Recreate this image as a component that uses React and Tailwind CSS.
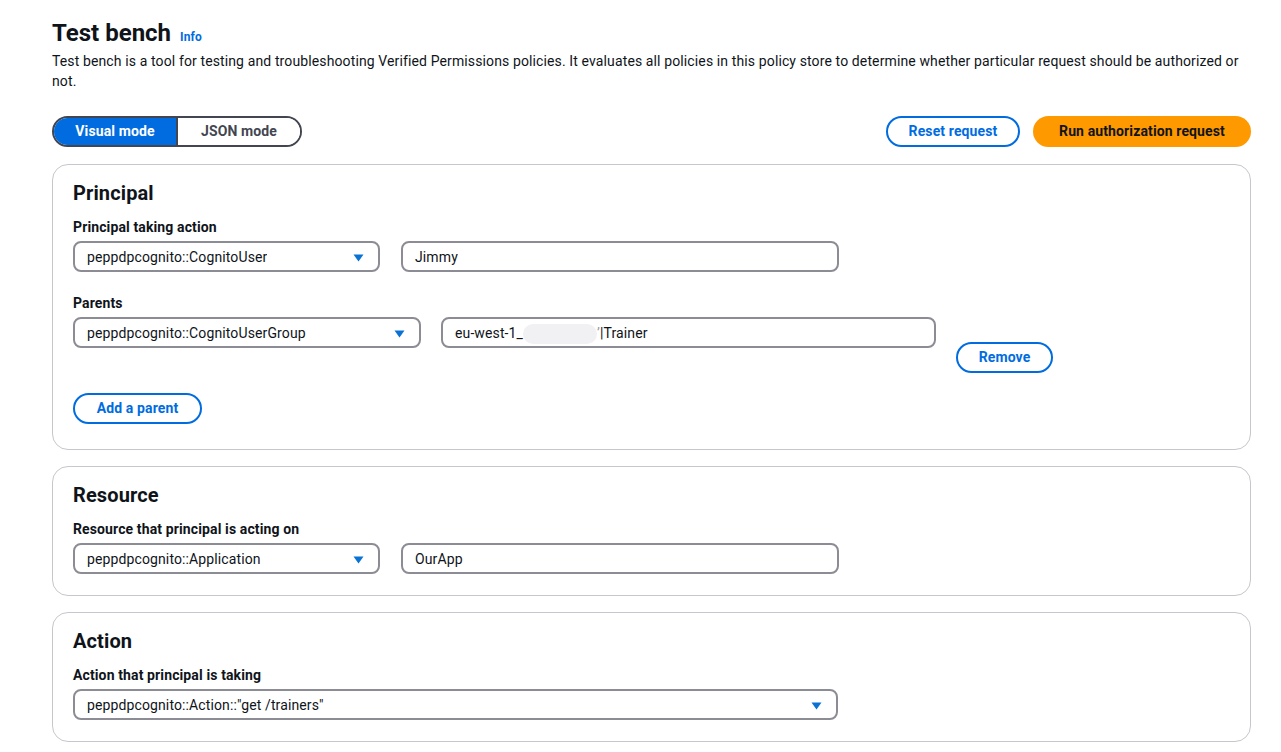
import React from "react";

const font = { fontFamily: 'Roboto, "Open Sans", sans-serif' };

function Caret() {
  return (
    <svg width="11" height="8" viewBox="0 0 11 8" className="shrink-0">
      <polygon points="0.5,0.5 10.5,0.5 5.5,7.5" fill="#0972d3" />
    </svg>
  );
}

function Select({ value, className }) {
  return (
    <div
      className={
        "h-[31px] border-2 border-[#8c8c94] rounded-[8px] flex items-center justify-between pl-[12px] pr-[14px] pt-[2px] text-[14px] text-[#0f141a] bg-white " +
        className
      }
    >
      <span className="truncate">{value}</span>
      <Caret />
    </div>
  );
}

function Input({ children, className }) {
  return (
    <div
      className={
        "h-[31px] border-2 border-[#8c8c94] rounded-[8px] flex items-center pl-[12px] pr-[12px] pt-[2px] text-[14px] text-[#0f141a] bg-white " +
        className
      }
    >
      {children}
    </div>
  );
}

function Label({ children }) {
  return <div className="text-[14px] leading-[20px] font-bold text-[#0f141a]">{children}</div>;
}

function Heading({ children }) {
  return <h2 className="text-[20px] leading-[24px] font-bold text-[#0f141a]">{children}</h2>;
}

function OutlineButton({ children, className }) {
  return (
    <button
      className={
        "h-[31px] border-2 border-[#006ce0] rounded-full text-[14px] font-bold text-[#006ce0] bg-white flex items-center justify-center " +
        className
      }
    >
      {children}
    </button>
  );
}

export default function App() {
  return (
    <div className="bg-white min-h-[752px] pl-[52px] pr-[30px] pt-[18px] text-[#0f141a] tracking-[0.12px]" style={font}>
      <div className="flex items-baseline gap-[9px]">
        <h1 className="text-[24px] leading-[30px] font-bold tracking-normal">Test bench</h1>
        <span className="text-[12px] font-bold text-[#006ce0]">Info</span>
      </div>
      <p className="mt-[3px] text-[14px] leading-[20px]">
        Test bench is a tool for testing and troubleshooting Verified Permissions policies. It evaluates all policies in
        this policy store to determine whether particular request should be authorized or not.
      </p>

      <div className="mt-[25px] flex items-center justify-between">
        <div className="flex h-[31px] border-2 border-[#424650] rounded-full overflow-hidden">
          <div className="w-[124px] bg-[#006ce0] text-white text-[14px] font-bold flex items-center justify-center border-r-2 border-[#424650]">
            Visual mode
          </div>
          <div className="w-[122px] bg-white text-[#424650] text-[14px] font-bold flex items-center justify-center">
            JSON mode
          </div>
        </div>
        <div className="flex items-center gap-[13px]">
          <OutlineButton className="w-[134px]">Reset request</OutlineButton>
          <button className="h-[31px] w-[218px] rounded-full bg-[#ff9900] text-[14px] font-bold text-[#0f141a]">
            Run authorization request
          </button>
        </div>
      </div>

      <div className="mt-[17px] flex flex-col gap-[16px]">
        <section className="border border-[#c6c6cd] rounded-[16px] pt-[16px] pb-[25px] px-[20px]">
          <Heading>Principal</Heading>
          <div className="mt-[12px]">
            <Label>Principal taking action</Label>
            <div className="mt-[4px] flex gap-[21px]">
              <Select value="peppdpcognito::CognitoUser" className="w-[307px]" />
              <Input className="w-[438px]">Jimmy</Input>
            </div>
          </div>
          <div className="mt-[21px]">
            <Label>Parents</Label>
            <div className="mt-[4px] flex gap-[20px] items-start">
              <Select value="peppdpcognito::CognitoUserGroup" className="w-[348px]" />
              <Input className="w-[495px]">
                <span>eu-west-1_</span>
                <span className="inline-block w-[74px] h-[20px] rounded-full bg-[#f1f1f3]" />
                <span className="text-[#9a9aa0]">’</span>
                <span>|Trainer</span>
              </Input>
              <OutlineButton className="w-[97px] mt-[25px]">Remove</OutlineButton>
            </div>
          </div>
          <OutlineButton className="w-[129px] mt-[20px]">Add a parent</OutlineButton>
        </section>

        <section className="border border-[#c6c6cd] rounded-[16px] pt-[16px] pb-[21px] px-[20px]">
          <Heading>Resource</Heading>
          <div className="mt-[12px]">
            <Label>Resource that principal is acting on</Label>
            <div className="mt-[4px] flex gap-[21px]">
              <Select value="peppdpcognito::Application" className="w-[307px]" />
              <Input className="w-[438px]">OurApp</Input>
            </div>
          </div>
        </section>

        <section className="border border-[#c6c6cd] rounded-[16px] pt-[16px] pb-[21px] px-[20px]">
          <Heading>Action</Heading>
          <div className="mt-[12px]">
            <Label>Action that principal is taking</Label>
            <div className="mt-[4px] flex">
              <Select value={'peppdpcognito::Action::"get /trainers"'} className="w-[765px]" />
            </div>
          </div>
        </section>
      </div>
    </div>
  );
}
